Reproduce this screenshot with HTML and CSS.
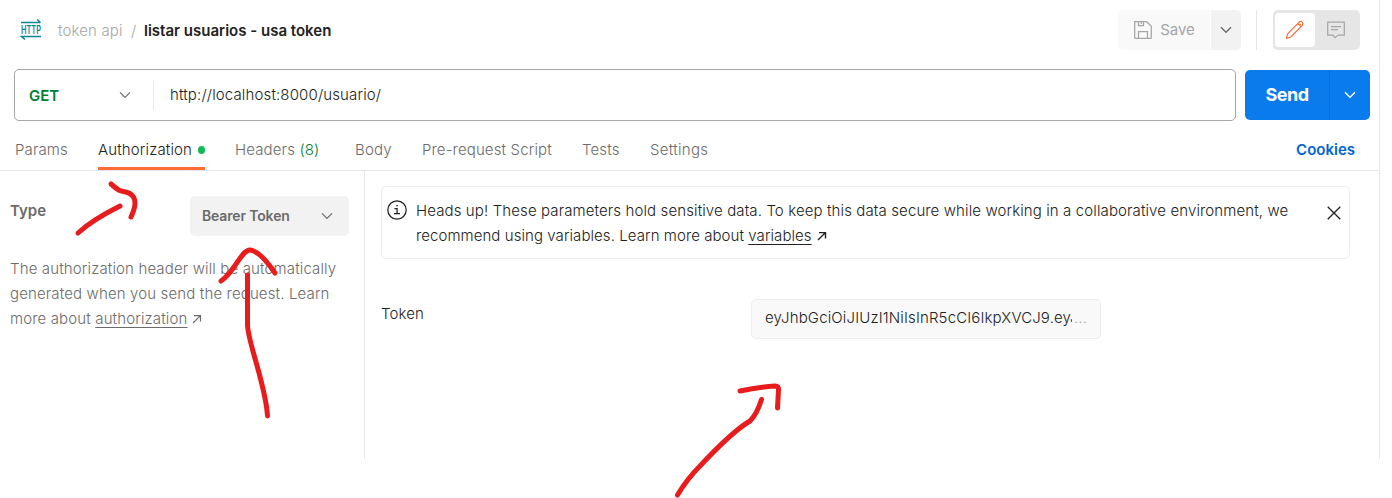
FILE: index.html
```html
<!DOCTYPE html>
<html lang="en">
<head>
<meta charset="utf-8">
<title>listar usuarios - usa token</title>
<link rel="stylesheet" href="styles.css">
</head>
<body>
<main class="request">
  <header class="topbar">
    <svg class="http-icon" width="22" height="22" viewBox="0 0 22 22">
      <g fill="none" stroke="#0e8296" stroke-width="1.4">
        <path d="M1 3.500h19.500M17 .500l3.500 3"/><path d="M21 17.500H1.500L5 20.500"/>
      </g>
      <text class="http-text" x="1" y="14.800" textLength="20" lengthAdjust="spacingAndGlyphs">HTTP</text>
    </svg>
    <span class="collection">token api</span>
    <span class="slash">/</span>
    <h1 class="name">listar usuarios - usa token</h1>
    <div class="save-group">
      <button class="save">
        <svg width="18" height="18" viewBox="0 0 18 18" fill="none" stroke="#a6a6a6" stroke-width="1.250"><path d="M.700.700h12l4.600 4.600v11.400q0 .600-.600.600H1.300q-.600 0-.600-.600zM4.500.700v3.800h5V.700M7.300 1.500v1.500M4.500 17v-6.500h9V17"/></svg>
        <span>Save</span>
      </button>
      <button class="save-more"><svg width="12" height="8" viewBox="0 0 12 8" fill="none" stroke="#6b6b6b" stroke-width="1.400"><path d="M1 1.300l5 5 5-5"/></svg></button>
    </div>
    <i class="rule"></i>
    <div class="modes">
      <button class="mode active"><svg width="20" height="20" viewBox="0 0 20 20" fill="none" stroke="#ff6c37" stroke-width="1.200" stroke-linejoin="round"><path d="M1.500 18.500l1.100-4.700L13.900 2.300q1.700-1.500 3.200-.200 1.500 1.500.200 3.200L5.800 17zM12.300 4q2.800.300 3.300 3M14.600 5.400l1.300-1.300"/></svg></button>
      <button class="mode comments"><svg width="20" height="20" viewBox="0 0 20 20" fill="none" stroke="#a6a6a6" stroke-width="1.250"><path d="M1.700 2h16.600v13h-6L9 17.700 6.700 15h-5zM5 6.500h10M5 9.500h7"/></svg></button>
    </div>
  </header>

  <section class="urlbar">
    <div class="url-box">
      <div class="method"><span>GET</span><svg width="12" height="8" viewBox="0 0 12 8" fill="none" stroke="#6b6b6b" stroke-width="1.200"><path d="M1 1.300l5 5 5-5"/></svg></div>
      <span class="url">http://localhost:8000/usuario/</span>
    </div>
    <div class="send-group">
      <button class="send">Send</button>
      <button class="send-more"><svg width="12" height="8" viewBox="0 0 12 8" fill="none" stroke="#fff" stroke-width="1.300"><path d="M1 1.300l5 5 5-5"/></svg></button>
    </div>
  </section>

  <nav class="tabs">
    <a class="tab t-params">Params</a>
    <a class="tab t-auth current">Authorization<i class="dot"></i></a>
    <a class="tab t-headers">Headers <span class="count">(8)</span></a>
    <a class="tab t-body">Body</a>
    <a class="tab t-script">Pre-request Script</a>
    <a class="tab t-tests">Tests</a>
    <a class="tab t-settings">Settings</a>
    <a class="cookies">Cookies</a>
  </nav>

  <div class="content">
    <aside class="auth-type">
      <div class="type-row">
        <span class="type-label">Type</span>
        <button class="select"><span>Bearer Token</span><svg width="12" height="8" viewBox="0 0 12 8" fill="none" stroke="#6b6b6b" stroke-width="1.200"><path d="M1 1.300l5 5 5-5"/></svg></button>
      </div>
      <p class="help">The authorization header will be automatically<br>generated when you send the request. Learn<br>more about <a class="link">authorization</a><svg class="ext" width="10" height="10" viewBox="0 0 10 10" fill="none" stroke="currentColor" stroke-width="1.200"><path d="M2 1.600h6.500v6M8.500 1.600L1 9"/></svg></p>
    </aside>
    <section class="detail">
      <div class="notice">
        <svg class="info" width="20" height="20" viewBox="0 0 20 20" fill="none" stroke="#212121" stroke-width="1.250"><circle cx="10" cy="10" r="9.200"/><path d="M7.500 8.500h2.600v5M7 13.700h6M9.300 5.700h1.600"/></svg>
        <p class="notice-text">Heads up! These parameters hold sensitive data. To keep this data secure while working in a collaborative environment, we<br><span class="line-two">recommend using variables. Learn more about <a class="link">variables</a></span><svg class="ext" width="10" height="10" viewBox="0 0 10 10" fill="none" stroke="currentColor" stroke-width="1.400"><path d="M2 1.600h6.500v6M8.500 1.600L1 9"/></svg></p>
        <svg class="close" width="14" height="14" viewBox="0 0 14 14" fill="none" stroke="#212121" stroke-width="1.300"><path d="M.700.700l12.600 12.600M13.300.700L.700 13.300"/></svg>
      </div>
      <div class="token-row">
        <label class="token-label">Token</label>
        <div class="token-input"><span class="token-value">eyJhbGciOiJIUzI1NiIsInR5cCI6IkpXVCJ9.eyJ</span><span class="more">...</span></div>
      </div>
    </section>
  </div>
</main>
<svg class="marks" width="1392" height="498" viewBox="0 0 1392 498">
  <path d="M78 233Q92 220 120 206M111 184C119 191 120 191 126 192Q141 196 131 217"/>
  <path d="M221 281C235 272 241 250 250 250Q260 251 275 273M247.500 275V325C248 343 266 386 267.500 416"/>
  <path d="M740 391Q758 387 775 386Q779 386 778.500 390L777.500 408M761.500 399.500Q757 414 750 421C733 431 714 451 700 466Q687 479 677.500 495"/>
</svg>
</body>
</html>
```
FILE: styles.css
```css
* { box-sizing: border-box; }
body { margin: 0; background: #fff; color: #212121; font: 350 15px/25px Inter, "Liberation Sans", sans-serif; letter-spacing: 0.14px; white-space: nowrap; overflow: hidden; }
button { border: 0; padding: 0; margin: 0; font: inherit; color: inherit; display: flex; align-items: center; justify-content: center; }
svg { flex: none; display: block; }
.request { width: 1380px; height: 459px; border-right: 1px solid #e6e6e6; display: flex; flex-direction: column; }

.topbar { height: 60px; flex: none; display: flex; align-items: center; padding: 0 19px 0 20px; }
.http-text { font: 600 11.500px Inter, sans-serif; letter-spacing: 0; fill: #0e8296; }
.collection { margin-left: 16px; width: 65px; color: #a6a6a6; }
.slash { margin-left: 8px; width: 13px; color: #a6a6a6; }
.name { margin: 0; font-size: 15px; font-weight: 600; line-height: 25px; letter-spacing: 0; }
.save-group { margin-left: auto; display: flex; gap: 1px; height: 40px; }
.save { width: 92px; gap: 8px; padding-left: 1px; background: #f9f9f9; color: #a6a6a6; border-radius: 5px 0 0 5px; font-weight: 420; }
.save span { padding-bottom: 1px; }
.save-more { width: 30px; background: #f2f2f2; border-radius: 0 5px 5px 0; }
.rule { width: 1px; height: 40px; margin: 0 16px 0 15px; background: #e6e6e6; }
.modes { width: 87px; height: 40px; padding: 3px 2px; display: flex; background: #e6e6e6; border-radius: 5px; }
.mode { width: 40px; height: 34px; background: transparent; border-radius: 4px; }
.mode.active { background: #fff; }
.comments { padding-left: 2px; }

.urlbar { display: flex; gap: 9px; padding: 9px 9px 0 14px; height: 61px; flex: none; }
.url-box { width: 1222px; height: 52px; border: 1px solid #a6a6a6; border-radius: 5px; display: flex; align-items: center; }
.method { width: 139px; height: 30px; padding: 0 22px 0 14px; border-right: 1px solid #e6e6e6; display: flex; align-items: center; justify-content: space-between; color: #007f31; font-weight: 600; letter-spacing: 0; }
.url { margin: 0 0 2px 16px; }
.send-group { display: flex; width: 125px; height: 50px; margin-top: 1px; background: #097bed; color: #fff; border-radius: 5px; }
.send { width: 84px; padding-bottom: 2px; background: transparent; font-size: 18px; font-weight: 700; letter-spacing: -0.5px; }
.send-more { width: 41px; background: transparent; border-left: 1px solid #066fd6; }

.tabs { height: 50px; flex: none; border-bottom: 1px solid #e6e6e6; display: flex; align-items: flex-end; padding: 0 24px 0 15px; color: #6b6b6b; }
.tab { height: 33px; }
.t-params { width: 83px; }
.t-auth { width: 107px; margin-right: 30px; }
.t-headers { width: 120px; }
.t-body { width: 67px; }
.t-script { width: 160px; }
.t-tests { width: 68px; }
.t-settings { letter-spacing: 0.3px; }
.current { color: #212121; border-bottom: 3px solid #ff6c37; display: flex; justify-content: space-between; }
.dot { width: 7px; height: 8px; margin-top: 9px; border-radius: 50%; background: #0cbb52; }
.count { color: #007f31; }
.cookies { height: 33px; margin-left: auto; color: #0265d2; font-weight: 600; letter-spacing: 0; }

.content { flex: 1; display: flex; }
.auth-type { width: 365px; border-right: 1px solid #e6e6e6; padding: 25px 15px 0 10px; color: #6b6b6b; }
.type-row { display: flex; justify-content: space-between; align-items: center; height: 40px; }
.type-label { font-weight: 600; padding-bottom: 11px; letter-spacing: 0; }
.select { width: 159px; height: 40px; padding: 0 16px 0 12px; justify-content: space-between; background: #f2f2f2; border-radius: 5px; font-weight: 600; font-size: 14px; letter-spacing: -0.15px; }
.select span { padding-bottom: 1px; }
.help { margin: 20px 0 0; }
.link { text-decoration: underline; text-underline-offset: 3px; text-decoration-thickness: 1px; }
.ext { display: inline-block; margin-left: 5px; }
.detail { flex: 1; padding: 15px 29px 0 16px; }
.notice { height: 73px; border: 1px solid #ededed; border-radius: 5px; display: flex; padding: 11px 8px 0 5px; letter-spacing: 0.115px; }
.info { margin-top: 2px; }
.notice-text { margin: 0 0 0 9px; }
.line-two { letter-spacing: 0.07px; }
.close { margin: 8px 0 0 auto; }
.token-row { display: flex; margin-top: 40px; }
.token-label { width: 370px; padding-top: 2px; }
.token-input { width: 350px; height: 40px; border: 1px solid #ededed; border-radius: 5px; background: #f9f9f9; padding: 5px 12px 0 13px; display: flex; }
.token-value { width: 307px; overflow: hidden; }
.more { color: #a6a6a6; margin-left: 2px; }

.marks { position: absolute; left: 0; top: 0; fill: none; stroke: #e81c1c; stroke-width: 5; stroke-linecap: round; stroke-linejoin: round; pointer-events: none; }
```
